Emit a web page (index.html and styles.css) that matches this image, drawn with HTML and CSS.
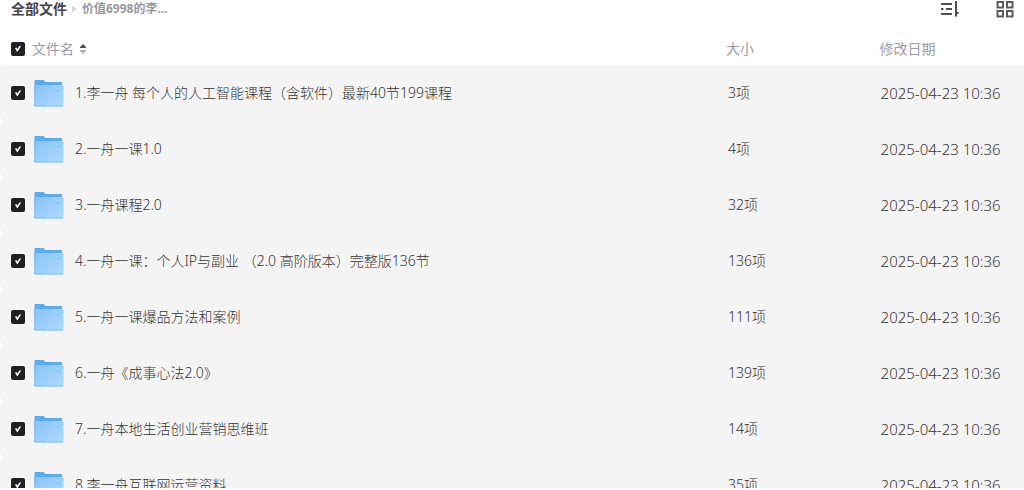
FILE: index.html
```html
<!DOCTYPE html>
<html lang="zh-CN">
<head>
<meta charset="utf-8">
<meta name="viewport" content="width=device-width, initial-scale=1">
<title>全部文件</title>
<link rel="stylesheet" href="styles.css">
</head>
<body>
<svg class="sprite" aria-hidden="true">
  <defs>
    <linearGradient id="folder-front" x1="0" y1="0" x2="1" y2="1">
      <stop offset="0" stop-color="#86c4f5"/>
      <stop offset="1" stop-color="#b0d9ff"/>
    </linearGradient>
    <symbol id="folder" viewBox="0 0 30 28">
      <path d="M.5 2q0-1 1-1h8l2 2h15.500q1 0 1 1v8H.5z" fill="#5eabea"/>
      <path d="M1.200 6h27.300q1 0 1 1v19.500q0 1-1 1H1.200q-.8 0-.8-1V6.800q0-.8.8-.8z" fill="url(#folder-front)"/>
      <path d="M.7 27.200h28.300" stroke="#84bdec" stroke-width=".8"/>
      <path d="M.8 6v21" stroke="#78b8ec" stroke-width=".8"/>
      <path d="M22.500 12h4" stroke="#84c0f0" stroke-width="1.500"/>
    </symbol>
  </defs>
</svg>
<main class="files">
  <header class="toolbar">
    <nav class="crumbs" aria-label="路径">
      <a class="crumb-root" href="#">全部文件</a>
      <svg class="crumb-arrow" viewBox="0 0 5 6" aria-hidden="true"><path d="M0 0h1l4 3-4 3H0z" fill="#dadadc"/></svg>
      <span class="crumb-current">价值6998的李...</span>
    </nav>
    <div class="tools">
      <button class="tool" type="button" aria-label="排序">
        <svg viewBox="0 0 20 20" fill="none" stroke="#505053" stroke-width="2"><path d="M1 4h11M1 9h2.500M6 9h6M1 14h11"/><path d="M16 1v15.500"/><path d="M15 17v-5h4.500z" fill="#505053" stroke="none"/></svg>
      </button>
      <button class="tool" type="button" aria-label="网格视图">
        <svg viewBox="0 0 20 20" fill="none" stroke="#5c5c60" stroke-width="2"><path d="M2.500 2H8v5.500H2.500zM12 2h5.500v5.500H12zM2.500 11H8v5.500H2.500zM12 11h5.500v5.500H12z"/></svg>
      </button>
    </div>
  </header>
  <table class="list">
    <thead>
      <tr>
        <th class="name" scope="col"><div class="cell"><input class="check" type="checkbox" aria-label="全选" checked><button class="sort" type="button">文件名<svg class="sort-icon" viewBox="0 0 8 12" aria-hidden="true"><path d="M4 1l3 3v1H1V4z" fill="#505053"/><path d="M4 11l3-3V7H1v1z" fill="#b0b0b4"/></svg></button></div></th>
        <th class="size" scope="col">大小</th>
        <th class="date" scope="col">修改日期</th>
      </tr>
    </thead>
    <tbody>
      <tr><td><label class="cell"><input class="check" type="checkbox" checked><svg class="folder"><use href="#folder"/></svg><span>1.李一舟 每个人的人工智能课程（含软件）最新40节199课程</span></label></td><td>3项</td><td>2025-04-23 10:36</td></tr>
      <tr><td><label class="cell"><input class="check" type="checkbox" checked><svg class="folder"><use href="#folder"/></svg><span>2.一舟一课1.0</span></label></td><td>4项</td><td>2025-04-23 10:36</td></tr>
      <tr><td><label class="cell"><input class="check" type="checkbox" checked><svg class="folder"><use href="#folder"/></svg><span>3.一舟课程2.0</span></label></td><td>32项</td><td>2025-04-23 10:36</td></tr>
      <tr><td><label class="cell"><input class="check" type="checkbox" checked><svg class="folder"><use href="#folder"/></svg><span>4.一舟一课：个人IP与副业 （2.0 高阶版本）完整版136节</span></label></td><td>136项</td><td>2025-04-23 10:36</td></tr>
      <tr><td><label class="cell"><input class="check" type="checkbox" checked><svg class="folder"><use href="#folder"/></svg><span>5.一舟一课爆品方法和案例</span></label></td><td>111项</td><td>2025-04-23 10:36</td></tr>
      <tr><td><label class="cell"><input class="check" type="checkbox" checked><svg class="folder"><use href="#folder"/></svg><span>6.一舟《成事心法2.0》</span></label></td><td>139项</td><td>2025-04-23 10:36</td></tr>
      <tr><td><label class="cell"><input class="check" type="checkbox" checked><svg class="folder"><use href="#folder"/></svg><span>7.一舟本地生活创业营销思维班</span></label></td><td>14项</td><td>2025-04-23 10:36</td></tr>
      <tr><td><label class="cell"><input class="check" type="checkbox" checked><svg class="folder"><use href="#folder"/></svg><span>8.李一舟互联网运营资料</span></label></td><td>35项</td><td>2025-04-23 10:36</td></tr>
    </tbody>
  </table>
</main>
</body>
</html>
```
FILE: styles.css
```css
* { box-sizing: border-box; }

body {
  margin: 0;
  background: #fff;
  color: #343436;
  font: 14px/20px "Noto Sans", "Noto Sans CJK SC", sans-serif;
}

.sprite { display: block; width: 0; height: 0; }

.files {
  height: calc(100vh - 2px);
  overflow: hidden;
}

.toolbar {
  display: flex;
  justify-content: space-between;
  align-items: flex-start;
  height: 32px;
  padding: 0 9px 0 11px;
}

.crumbs {
  display: flex;
  align-items: center;
  gap: 5px;
  height: 18px;
  font-weight: 700;
}

.crumb-root { color: #45454b; text-decoration: none; }
.crumb-arrow { width: 5px; height: 6px; }
.crumb-current { color: #98989c; font-size: 12px; }

.tools { display: flex; gap: 35px; }

.tool {
  width: 20px;
  height: 20px;
  padding: 0;
  border: 0;
  background: none;
}

.tool svg { display: block; width: 20px; height: 20px; }

.list {
  width: 100%;
  table-layout: fixed;
  border-collapse: separate;
  border-spacing: 0;
}

.list th {
  height: 33px;
  padding: 0;
  color: #9c9ca2;
  font-weight: 400;
  text-align: left;
}

.name { width: 70.9%; }
.size { width: 15%; }

.list td {
  height: 56px;
  padding: 0 0 0 2px;
  background: #f4f4f4;
  font-weight: 300;
  white-space: nowrap;
}

.list td:first-child {
  padding: 0;
  border-radius: 4px 0 0 4px;
}

.list td:last-child {
  padding: 0 0 0 1px;
  font-size: 15px;
}

.cell {
  display: flex;
  align-items: center;
  padding-left: 11px;
}

.check {
  appearance: none;
  display: grid;
  place-items: center;
  flex: none;
  width: 14px;
  height: 14px;
  margin: 0;
  border-radius: 2px;
  background: #202127;
}

.check:checked::before {
  content: "";
  width: 6px;
  height: 6px;
  background: #fff;
  clip-path: polygon(0 45%, 22% 35%, 40% 60%, 80% 0, 100% 14%, 45% 100%, 32% 100%);
}

.sort {
  display: flex;
  align-items: center;
  gap: 5px;
  margin-left: 7px;
  padding: 0;
  border: 0;
  background: none;
  color: inherit;
  font: inherit;
}

.sort-icon { width: 8px; height: 12px; }

.folder {
  flex: none;
  width: 30px;
  height: 28px;
  margin: 0 11px 0 9px;
}
```
